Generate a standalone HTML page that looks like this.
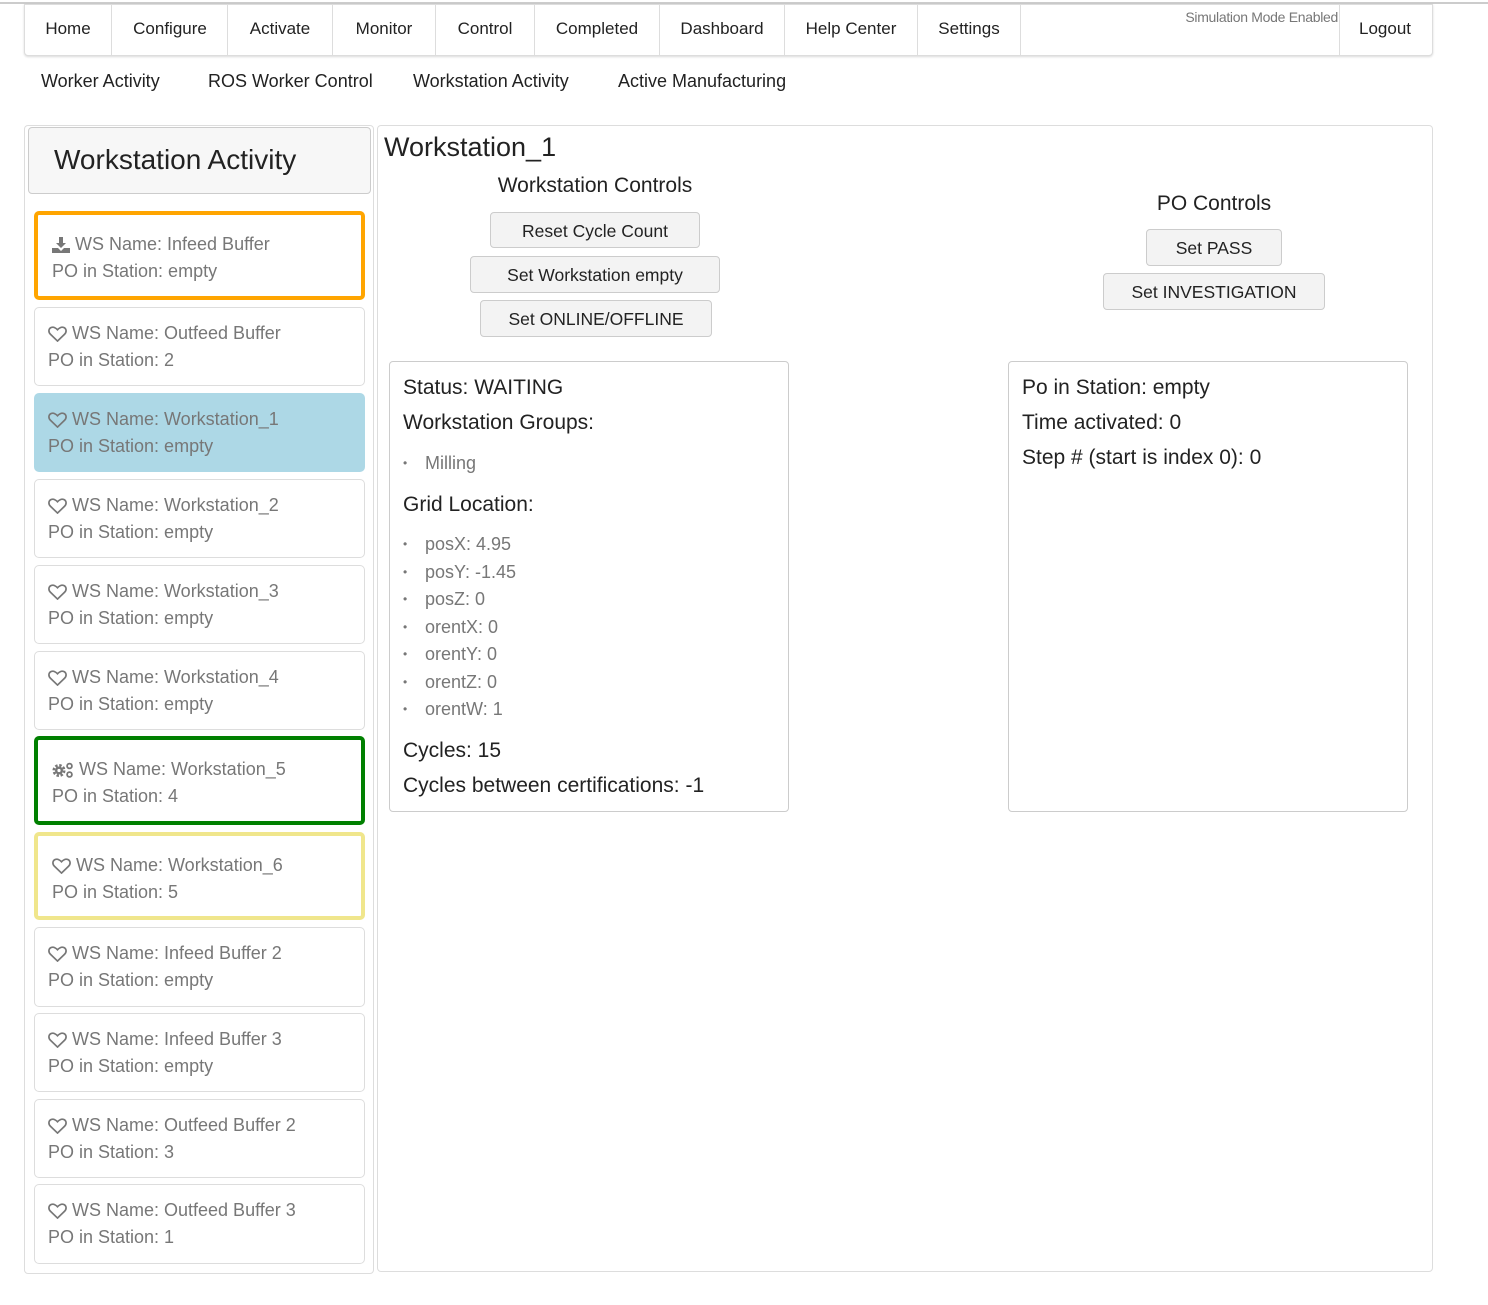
<!DOCTYPE html>
<html><head><meta charset="utf-8"><style>
*{box-sizing:border-box;margin:0;padding:0}
body{width:1488px;height:1305px;background:#fff;font-family:"Liberation Sans",sans-serif;color:#222;position:relative;overflow:hidden}
.a{position:absolute;white-space:nowrap}
.topline{position:absolute;left:0;top:2px;width:1488px;height:2px;background:#ccc}
.nav{position:absolute;left:24px;top:4px;width:1409px;height:52px;border:1px solid #ddd;border-radius:0 0 4px 4px;box-shadow:0 1px 2px rgba(0,0,0,.15);background:#fff}
.div{position:absolute;top:4px;width:1px;height:51px;background:#ddd}
.nt{position:absolute;top:19px;font-size:17px;color:#222;transform:translateX(-50%)}
.sub{position:absolute;top:71px;font-size:18px;color:#222}
.box{position:absolute;border:1px solid #ddd;border-radius:4px;background:#fff}
.card{position:absolute;left:34px;width:331px;border:1px solid #ddd;border-radius:5px;background:#fff;color:#777;font-size:18px}
.card .l1{position:absolute;left:13px;top:15px;display:flex;align-items:center;gap:5px}
.card .l2{position:absolute;left:13px;top:42px}
.hb .l1,.hb .l2{left:14px}
.btn{position:absolute;border:1px solid #ccc;border-radius:4px;background:#f3f3f3;font-size:17.5px;text-align:center;color:#222}
.big{font-size:21px;color:#222}
.li{position:absolute;left:403px;font-size:18px;color:#777}
.li:before{content:"•";position:absolute;left:0;font-size:12px;top:3px}
.li span{position:absolute;left:22px;white-space:nowrap}
</style></head><body>
<div class="topline"></div>
<div class="nav">
</div>
<div class="div" style="left:111px"></div><div class="div" style="left:227px"></div><div class="div" style="left:332px"></div><div class="div" style="left:435px"></div><div class="div" style="left:534px"></div><div class="div" style="left:659px"></div><div class="div" style="left:784px"></div><div class="div" style="left:917px"></div><div class="div" style="left:1020px"></div><div class="div" style="left:1339px"></div>
<div class="nt" style="left:68px">Home</div>
<div class="nt" style="left:170px">Configure</div>
<div class="nt" style="left:280px">Activate</div>
<div class="nt" style="left:384px">Monitor</div>
<div class="nt" style="left:485px">Control</div>
<div class="nt" style="left:597px">Completed</div>
<div class="nt" style="left:722px">Dashboard</div>
<div class="nt" style="left:851px">Help Center</div>
<div class="nt" style="left:969px">Settings</div>
<div class="nt" style="left:1385px">Logout</div>
<div class="a" style="left:1160px;top:9px;font-size:14px;color:#777;width:178px;text-align:right;letter-spacing:-.3px">Simulation Mode Enabled</div>
<div class="sub" style="left:41px">Worker Activity</div>
<div class="sub" style="left:208px">ROS Worker Control</div>
<div class="sub" style="left:413px">Workstation Activity</div>
<div class="sub" style="left:618px">Active Manufacturing</div>

<div class="box" style="left:24px;top:125px;width:350px;height:1149px"></div>
<div class="box" style="left:28px;top:127px;width:343px;height:67px;background:#f7f7f7;border-color:#ccc"></div>
<div class="a" style="left:54px;top:144px;font-size:28px;color:#222">Workstation Activity</div>

<div class="card hb" style="top:211px;height:89px;border:4px solid #ffa500"><div class="l1" style="top:19px"><svg width="18" height="16" viewBox="0 0 18 16"><path d="M7 0h4v6h3l-5 5-5-5h3z" fill="#777"/><path d="M0 11h6l3 3 3-3h6v5H0z" fill="#777"/></svg>WS Name: Infeed Buffer</div><div class="l2" style="top:46px">PO in Station: empty</div></div>

<div class="card" style="top:307px;height:79px"><div class="l1"><svg width="19" height="16" viewBox="0 0 20 17"><path d="M10 16 2.5 8.8C0 6.3.5 2.5 3.5 1.5 6 .7 8 2 10 4c2-2 4-3.3 6.5-2.5 3 1 3.5 4.8 1 7.3z" fill="none" stroke="#777" stroke-width="1.8"/></svg>WS Name: Outfeed Buffer</div><div class="l2">PO in Station: 2</div></div>

<div class="card" style="top:393px;height:79px;background:#add8e6;border-color:#add8e6"><div class="l1"><svg width="19" height="16" viewBox="0 0 20 17"><path d="M10 16 2.5 8.8C0 6.3.5 2.5 3.5 1.5 6 .7 8 2 10 4c2-2 4-3.3 6.5-2.5 3 1 3.5 4.8 1 7.3z" fill="none" stroke="#777" stroke-width="1.8"/></svg>WS Name: Workstation_1</div><div class="l2">PO in Station: empty</div></div>

<div class="card" style="top:479px;height:79px"><div class="l1"><svg width="19" height="16" viewBox="0 0 20 17"><path d="M10 16 2.5 8.8C0 6.3.5 2.5 3.5 1.5 6 .7 8 2 10 4c2-2 4-3.3 6.5-2.5 3 1 3.5 4.8 1 7.3z" fill="none" stroke="#777" stroke-width="1.8"/></svg>WS Name: Workstation_2</div><div class="l2">PO in Station: empty</div></div>

<div class="card" style="top:565px;height:79px"><div class="l1"><svg width="19" height="16" viewBox="0 0 20 17"><path d="M10 16 2.5 8.8C0 6.3.5 2.5 3.5 1.5 6 .7 8 2 10 4c2-2 4-3.3 6.5-2.5 3 1 3.5 4.8 1 7.3z" fill="none" stroke="#777" stroke-width="1.8"/></svg>WS Name: Workstation_3</div><div class="l2">PO in Station: empty</div></div>

<div class="card" style="top:651px;height:79px"><div class="l1"><svg width="19" height="16" viewBox="0 0 20 17"><path d="M10 16 2.5 8.8C0 6.3.5 2.5 3.5 1.5 6 .7 8 2 10 4c2-2 4-3.3 6.5-2.5 3 1 3.5 4.8 1 7.3z" fill="none" stroke="#777" stroke-width="1.8"/></svg>WS Name: Workstation_4</div><div class="l2">PO in Station: empty</div></div>

<div class="card hb" style="top:736px;height:89px;border:4px solid #008000"><div class="l1" style="top:19px"><svg width="22" height="16" viewBox="0 0 22 16"><circle cx="7" cy="8.5" r="5.2" fill="none" stroke="#777" stroke-width="2.6" stroke-dasharray="2.4 1.7"/><circle cx="7" cy="8.5" r="4" fill="#777"/><circle cx="7" cy="8.5" r="1.6" fill="#fff"/><circle cx="17.5" cy="4" r="2.4" fill="none" stroke="#777" stroke-width="1.8"/><circle cx="17.5" cy="12.5" r="2.4" fill="none" stroke="#777" stroke-width="1.8"/></svg>WS Name: Workstation_5</div><div class="l2" style="top:46px">PO in Station: 4</div></div>

<div class="card hb" style="top:832px;height:88px;border:4px solid #f0e68c"><div class="l1" style="top:19px"><svg width="19" height="16" viewBox="0 0 20 17"><path d="M10 16 2.5 8.8C0 6.3.5 2.5 3.5 1.5 6 .7 8 2 10 4c2-2 4-3.3 6.5-2.5 3 1 3.5 4.8 1 7.3z" fill="none" stroke="#777" stroke-width="1.8"/></svg>WS Name: Workstation_6</div><div class="l2" style="top:46px">PO in Station: 5</div></div>

<div class="card" style="top:927px;height:80px"><div class="l1"><svg width="19" height="16" viewBox="0 0 20 17"><path d="M10 16 2.5 8.8C0 6.3.5 2.5 3.5 1.5 6 .7 8 2 10 4c2-2 4-3.3 6.5-2.5 3 1 3.5 4.8 1 7.3z" fill="none" stroke="#777" stroke-width="1.8"/></svg>WS Name: Infeed Buffer 2</div><div class="l2">PO in Station: empty</div></div>

<div class="card" style="top:1013px;height:79px"><div class="l1"><svg width="19" height="16" viewBox="0 0 20 17"><path d="M10 16 2.5 8.8C0 6.3.5 2.5 3.5 1.5 6 .7 8 2 10 4c2-2 4-3.3 6.5-2.5 3 1 3.5 4.8 1 7.3z" fill="none" stroke="#777" stroke-width="1.8"/></svg>WS Name: Infeed Buffer 3</div><div class="l2">PO in Station: empty</div></div>

<div class="card" style="top:1099px;height:79px"><div class="l1"><svg width="19" height="16" viewBox="0 0 20 17"><path d="M10 16 2.5 8.8C0 6.3.5 2.5 3.5 1.5 6 .7 8 2 10 4c2-2 4-3.3 6.5-2.5 3 1 3.5 4.8 1 7.3z" fill="none" stroke="#777" stroke-width="1.8"/></svg>WS Name: Outfeed Buffer 2</div><div class="l2">PO in Station: 3</div></div>

<div class="card" style="top:1184px;height:80px"><div class="l1"><svg width="19" height="16" viewBox="0 0 20 17"><path d="M10 16 2.5 8.8C0 6.3.5 2.5 3.5 1.5 6 .7 8 2 10 4c2-2 4-3.3 6.5-2.5 3 1 3.5 4.8 1 7.3z" fill="none" stroke="#777" stroke-width="1.8"/></svg>WS Name: Outfeed Buffer 3</div><div class="l2">PO in Station: 1</div></div>

<div class="box" style="left:377px;top:125px;width:1056px;height:1147px"></div>
<div class="a" style="left:384px;top:132px;font-size:27px;color:#222">Workstation_1</div>
<div class="a" style="left:595px;top:174px;font-size:21px;transform:translateX(-50%)">Workstation Controls</div>
<div class="btn" style="left:490px;top:212px;width:210px;height:36px;line-height:36px">Reset Cycle Count</div>
<div class="btn" style="left:470px;top:256px;width:250px;height:37px;line-height:36px">Set Workstation empty</div>
<div class="btn" style="left:480px;top:300px;width:232px;height:37px;line-height:37px">Set ONLINE/OFFLINE</div>
<div class="a" style="left:1214px;top:192px;font-size:21px;transform:translateX(-50%)">PO Controls</div>
<div class="btn" style="left:1146px;top:229px;width:136px;height:37px;line-height:36px">Set PASS</div>
<div class="btn" style="left:1103px;top:273px;width:222px;height:37px;line-height:37px">Set INVESTIGATION</div>

<div class="box" style="left:389px;top:361px;width:400px;height:451px;border-color:#ccc"></div>
<div class="a big" style="left:403px;top:376px">Status: WAITING</div>
<div class="a big" style="left:403px;top:411px">Workstation Groups:</div>
<div class="li" style="top:453px"><span>Milling</span></div>
<div class="a big" style="left:403px;top:493px">Grid Location:</div>
<div class="li" style="top:534px"><span>posX: 4.95</span></div>
<div class="li" style="top:562px"><span>posY: -1.45</span></div>
<div class="li" style="top:589px"><span>posZ: 0</span></div>
<div class="li" style="top:617px"><span>orentX: 0</span></div>
<div class="li" style="top:644px"><span>orentY: 0</span></div>
<div class="li" style="top:672px"><span>orentZ: 0</span></div>
<div class="li" style="top:699px"><span>orentW: 1</span></div>
<div class="a big" style="left:403px;top:739px">Cycles: 15</div>
<div class="a big" style="left:403px;top:774px">Cycles between certifications: -1</div>

<div class="box" style="left:1008px;top:361px;width:400px;height:451px;border-color:#ccc"></div>
<div class="a big" style="left:1022px;top:376px">Po in Station: empty</div>
<div class="a big" style="left:1022px;top:411px">Time activated: 0</div>
<div class="a big" style="left:1022px;top:446px">Step # (start is index 0): 0</div>
</body></html>
